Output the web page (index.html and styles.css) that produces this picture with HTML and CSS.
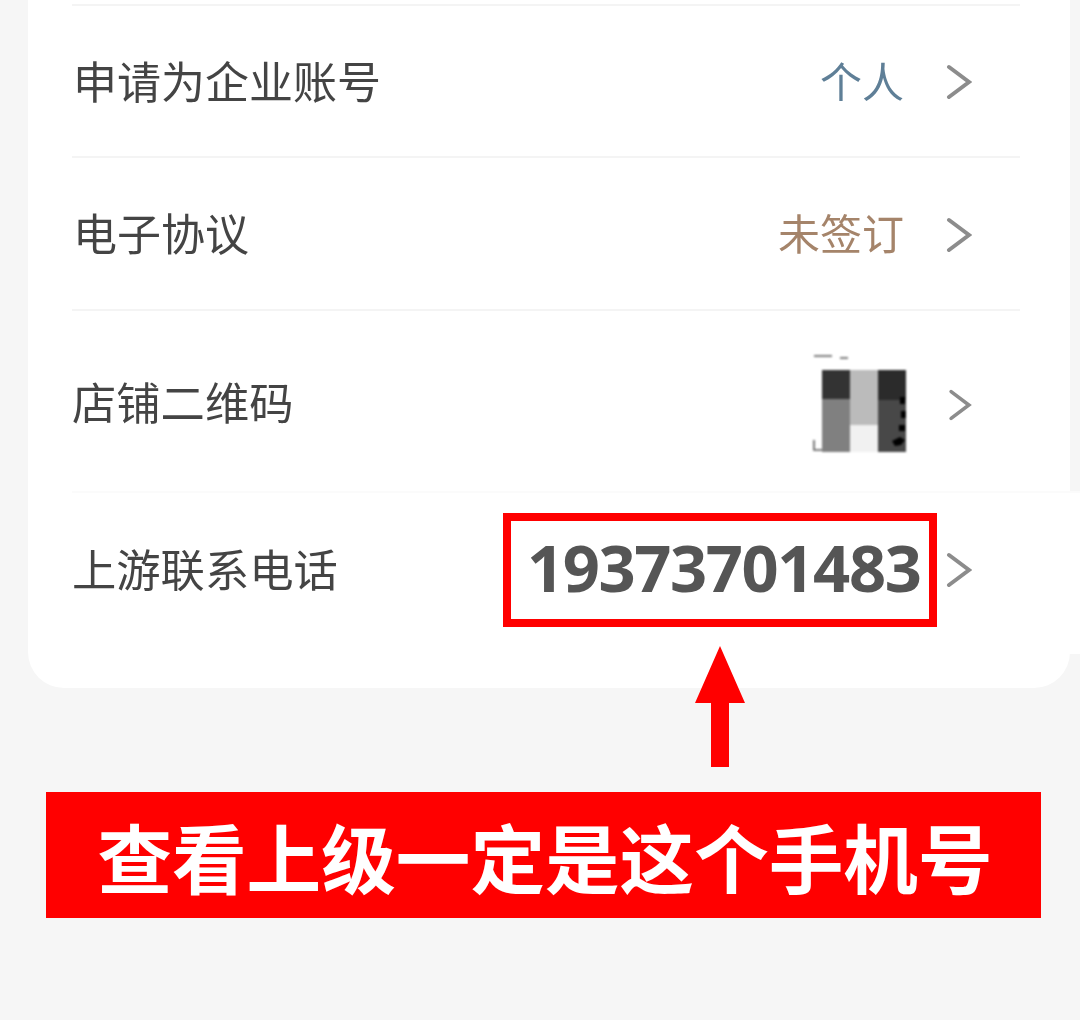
FILE: index.html
```html
<!DOCTYPE html>
<html lang="zh-CN">
<head>
  <meta charset="UTF-8" />
  <meta name="viewport" content="width=device-width, initial-scale=1" />
  <title>上游联系电话</title>
  <link rel="stylesheet" href="styles.css">
</head>
<body>
  <div class="card">
    <div class="row row-first">
      <span class="label">申请为企业账号</span>
      <span class="value value-blue">个人</span>
      <svg class="chev" viewBox="0 0 26 36"><path d="M3 3 L23 18 L3 33" /></svg>
    </div>
    <div class="row row-second">
      <span class="label">电子协议</span>
      <span class="value value-brown">未签订</span>
      <svg class="chev" viewBox="0 0 26 36"><path d="M3 3 L23 18 L3 33" /></svg>
    </div>
    <div class="row row-third">
      <span class="label">店铺二维码</span>
      <svg class="qr" viewBox="0 0 100 100">
        <path class="qr-mark" d="M2 1 H20 M28 3 H36 M2 85 V95 H14" />
        <rect x="10" y="15" width="28" height="29" fill="#333" />
        <rect x="10" y="44" width="28" height="53" fill="#808080" />
        <rect x="38" y="15" width="28" height="55" fill="#bbb" />
        <rect x="38" y="70" width="28" height="27" fill="#f1f1f1" />
        <rect x="66" y="15" width="28" height="30" fill="#2b2b2b" />
        <rect x="66" y="45" width="28" height="52" fill="#484848" />
        <path d="M88 42 h5 v7 h-5z M89 56 h5 v7 h-5z M87 70 h6 v6 h-6z M80 86 l8 -4 l5 3 l-4 5 l-6 1z" fill="#000" />
      </svg>
      <svg class="chev chev-small" viewBox="0 0 26 36"><path d="M3 3 L23 18 L3 33" /></svg>
    </div>
    <div class="row row-last">
      <span class="label">上游联系电话</span>
      <span class="phone-box">19373701483</span>
      <svg class="chev" viewBox="0 0 26 36"><path d="M3 3 L23 18 L3 33" /></svg>
    </div>
  </div>

  <div class="arrow-wrap">
    <svg class="arrow" viewBox="0 0 50 121"><path d="M25 0 L50 57 L34 57 L34 121 L16 121 L16 57 L0 57 Z" /></svg>
  </div>

  <div class="banner">查看上级一定是这个手机号</div>
</body>
</html>
```

FILE: styles.css
```css
html, body {
  margin: 0;
  padding: 0;
}
body {
  height: 1020px;
  overflow: hidden;
  background: #f6f6f6;
  font-family: "Noto Sans CJK SC", "Noto Sans", sans-serif;
}
.card {
  margin-left: 28px;
  width: 1042px;
  height: 688px;
  box-sizing: border-box;
  padding-top: 4px;
  background: #fff;
  border-radius: 0 0 36px 36px;
  display: flex;
  flex-direction: column;
}
.row {
  display: flex;
  align-items: center;
  margin: 0 50px 0 44px;
  padding-right: 48px;
  border-top: 2px solid #f4f4f4;
  box-sizing: border-box;
}
.row-first {
  height: 152px;
}
.row-second {
  height: 153px;
}
.row-third {
  height: 182px;
}
.row-last {
  height: 163px;
  margin-right: -10px;
  padding-right: 108px;
  padding-bottom: 7px;
  background: #fff;
  border-top-color: #fbfbfb;
}
.label {
  flex: 1;
  font-size: 44px;
  color: #444;
  line-height: 60px;
  padding-left: 1px;
  filter: blur(0.5px);
}
.row-first .label {
  padding-bottom: 2px;
}
.row-second .label {
  padding-bottom: 4px;
}
.row-third .label,
.row-last .label {
  padding-left: 0;
  font-size: 44.3px;
}
.row-last .label {
  padding-bottom: 4px;
}
.value {
  font-size: 42px;
  line-height: 60px;
  margin-right: 42px;
  filter: blur(0.5px);
}
.value-blue {
  color: #5f7f97;
  padding-bottom: 2px;
}
.value-brown {
  color: #a5846a;
  padding-bottom: 4px;
}
.chev {
  width: 26px;
  height: 36px;
  flex: none;
  margin-top: 2px;
  filter: blur(0.6px);
}
.chev path {
  fill: none;
  stroke: #8c8c8c;
  stroke-width: 4;
  stroke-linecap: round;
  stroke-linejoin: miter;
}
.chev-small {
  width: 24px;
  height: 32px;
  margin-top: 8px;
}
.row-last .chev {
  margin-top: 0;
}
.qr {
  width: 100px;
  height: 100px;
  flex: none;
  margin-top: 8px;
  margin-right: 36px;
  filter: blur(1px);
}
.qr-mark {
  fill: none;
  stroke: #555;
  stroke-width: 1.6;
}
.phone-box {
  box-sizing: border-box;
  width: 434px;
  height: 114px;
  margin-right: 9px;
  border: 8px solid #f00;
  padding-left: 16px;
  font-family: "Open Sans", sans-serif;
  font-weight: 700;
  font-size: 65px;
  letter-spacing: -1.4px;
  line-height: 92px;
  color: #555;
  white-space: nowrap;
}
.arrow-wrap {
  display: flex;
  padding: 0 0 0 695px;
  margin-top: -42px;
  height: 121px;
  position: relative;
}
.arrow {
  width: 50px;
  height: 121px;
}
.arrow path {
  fill: #f00;
}
.banner {
  margin: 25px 0 0 46px;
  box-sizing: border-box;
  width: 995px;
  height: 126px;
  padding-left: 3px;
  background: #f00;
  color: #fff;
  font-weight: 700;
  font-size: 74.6px;
  line-height: 126px;
  text-align: center;
  white-space: nowrap;
}
```
